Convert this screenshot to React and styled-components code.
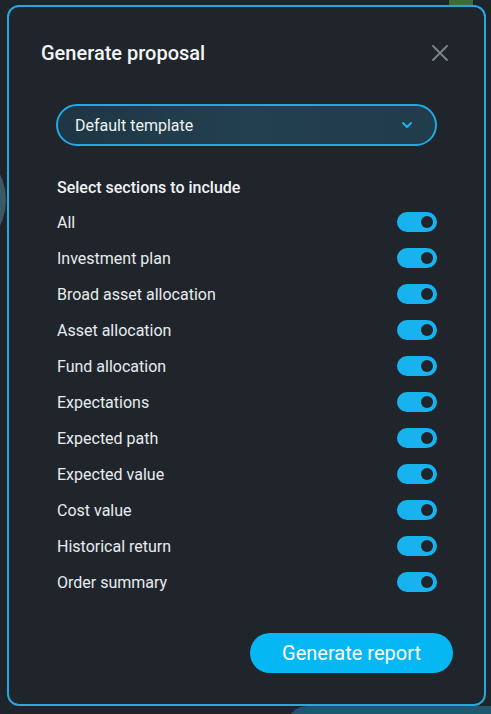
import styled, { createGlobalStyle } from 'styled-components'

const GlobalStyle = createGlobalStyle`
    html, body {
        margin: 0;
        padding: 0;
        background: #1d242a;
        font-family: Roboto, "Liberation Sans", sans-serif;
    }
`

const sections = [
    'All',
    'Investment plan',
    'Broad asset allocation',
    'Asset allocation',
    'Fund allocation',
    'Expectations',
    'Expected path',
    'Expected value',
    'Cost value',
    'Historical return',
    'Order summary',
]

export default function App() {
    return (
        <Page>
            <GlobalStyle />
            <GreenBlock />
            <LeftBlob />
            <BottomShape />
            <Dialog>
                <Header>
                    <Title>Generate proposal</Title>
                    <CloseBtn aria-label="Close">
                        <svg width="16" height="16" viewBox="0 0 16 16">
                            <path d="M1 1 L15 15 M15 1 L1 15" stroke="#7d858c" strokeWidth="1.8" strokeLinecap="round" />
                        </svg>
                    </CloseBtn>
                </Header>

                <Body>
                    <Select>
                        <span>Default template</span>
                        <svg width="12" height="8" viewBox="0 0 12 8">
                            <polyline points="2,2 6,6 10,2" fill="none" stroke="#1fb2ec" strokeWidth="2" strokeLinecap="round" strokeLinejoin="round" />
                        </svg>
                    </Select>

                    <SectionLabel>Select sections to include</SectionLabel>

                    <List>
                        {sections.map((s) => (
                            <Row key={s}>
                                <span>{s}</span>
                                <Toggle $on />
                            </Row>
                        ))}
                    </List>
                </Body>

                <Footer>
                    <PrimaryBtn>Generate report</PrimaryBtn>
                </Footer>
            </Dialog>
        </Page>
    )
}

const Page = styled.div`
    position: relative;
    width: 491px;
    height: 714px;
    overflow: hidden;
    background: #1d242a;
    padding: 5px 5px 0 7px;
    box-sizing: border-box;
`

const GreenBlock = styled.div`
    position: absolute;
    top: 0;
    left: 449px;
    width: 24px;
    height: 6px;
    background: #3f6a3a;
`

const LeftBlob = styled.div`
    position: absolute;
    top: 150px;
    left: -80px;
    width: 86px;
    height: 100px;
    border-radius: 50%;
    background: #3b5866;
`

const BottomShape = styled.div`
    position: absolute;
    top: 706px;
    left: 287px;
    width: 260px;
    height: 40px;
    border-radius: 20px 0 0 0;
    background: #1f5670;
`

const Dialog = styled.div`
    position: relative;
    width: 479px;
    height: 701px;
    box-sizing: border-box;
    border: 2px solid #2aa6dc;
    border-radius: 12px;
    background: #1f252b;
    display: flex;
    flex-direction: column;
`

const Header = styled.div`
    display: flex;
    align-items: center;
    justify-content: space-between;
    padding: 33px 36px 0 32px;
    height: 26px;
`

const Title = styled.h2`
    margin: 0;
    font-size: 20px;
    font-weight: 500;
    color: #f3f5f6;
`

const CloseBtn = styled.button`
    background: none;
    border: none;
    padding: 0;
    display: flex;
    cursor: pointer;
`

const Body = styled.div`
    padding: 38px 47px 0 47px;
    display: flex;
    flex-direction: column;
`

const Select = styled.div`
    height: 42px;
    box-sizing: border-box;
    border: 2px solid #1fa9e6;
    border-radius: 21px;
    background: linear-gradient(90deg, #1e3644 0%, #23404f 50%, #213c4b 100%);
    display: flex;
    align-items: center;
    justify-content: space-between;
    padding: 0 22px 0 17px;
    color: #eef2f4;
    font-size: 16px;
`

const SectionLabel = styled.div`
    margin-top: 32px;
    padding-left: 1px;
    font-size: 16px;
    font-weight: 500;
    color: #f1f3f5;
    line-height: 20px;
`

const List = styled.div`
    margin-top: 6px;
    display: flex;
    flex-direction: column;
`

const Row = styled.div`
    height: 36px;
    display: flex;
    align-items: center;
    justify-content: space-between;
    padding-left: 1px;
    font-size: 16px;
    color: #e8ecef;
`

const Toggle = styled.div`
    position: relative;
    width: 40px;
    height: 20px;
    border-radius: 10px;
    background: ${(p) => (p.$on ? '#16b3ee' : '#4a535b')};

    &::after {
        content: '';
        position: absolute;
        top: 4px;
        left: ${(p) => (p.$on ? '24px' : '4px')};
        width: 12px;
        height: 12px;
        border-radius: 50%;
        background: #1f252b;
    }
`

const Footer = styled.div`
    margin-top: auto;
    display: flex;
    justify-content: flex-end;
    padding: 0 31px 31px 0;
`

const PrimaryBtn = styled.button`
    width: 203px;
    height: 40px;
    border: none;
    border-radius: 20px;
    background: #05b7f2;
    color: #ffffff;
    font-family: Roboto, "Liberation Sans", sans-serif;
    font-size: 20px;
    cursor: pointer;
`
